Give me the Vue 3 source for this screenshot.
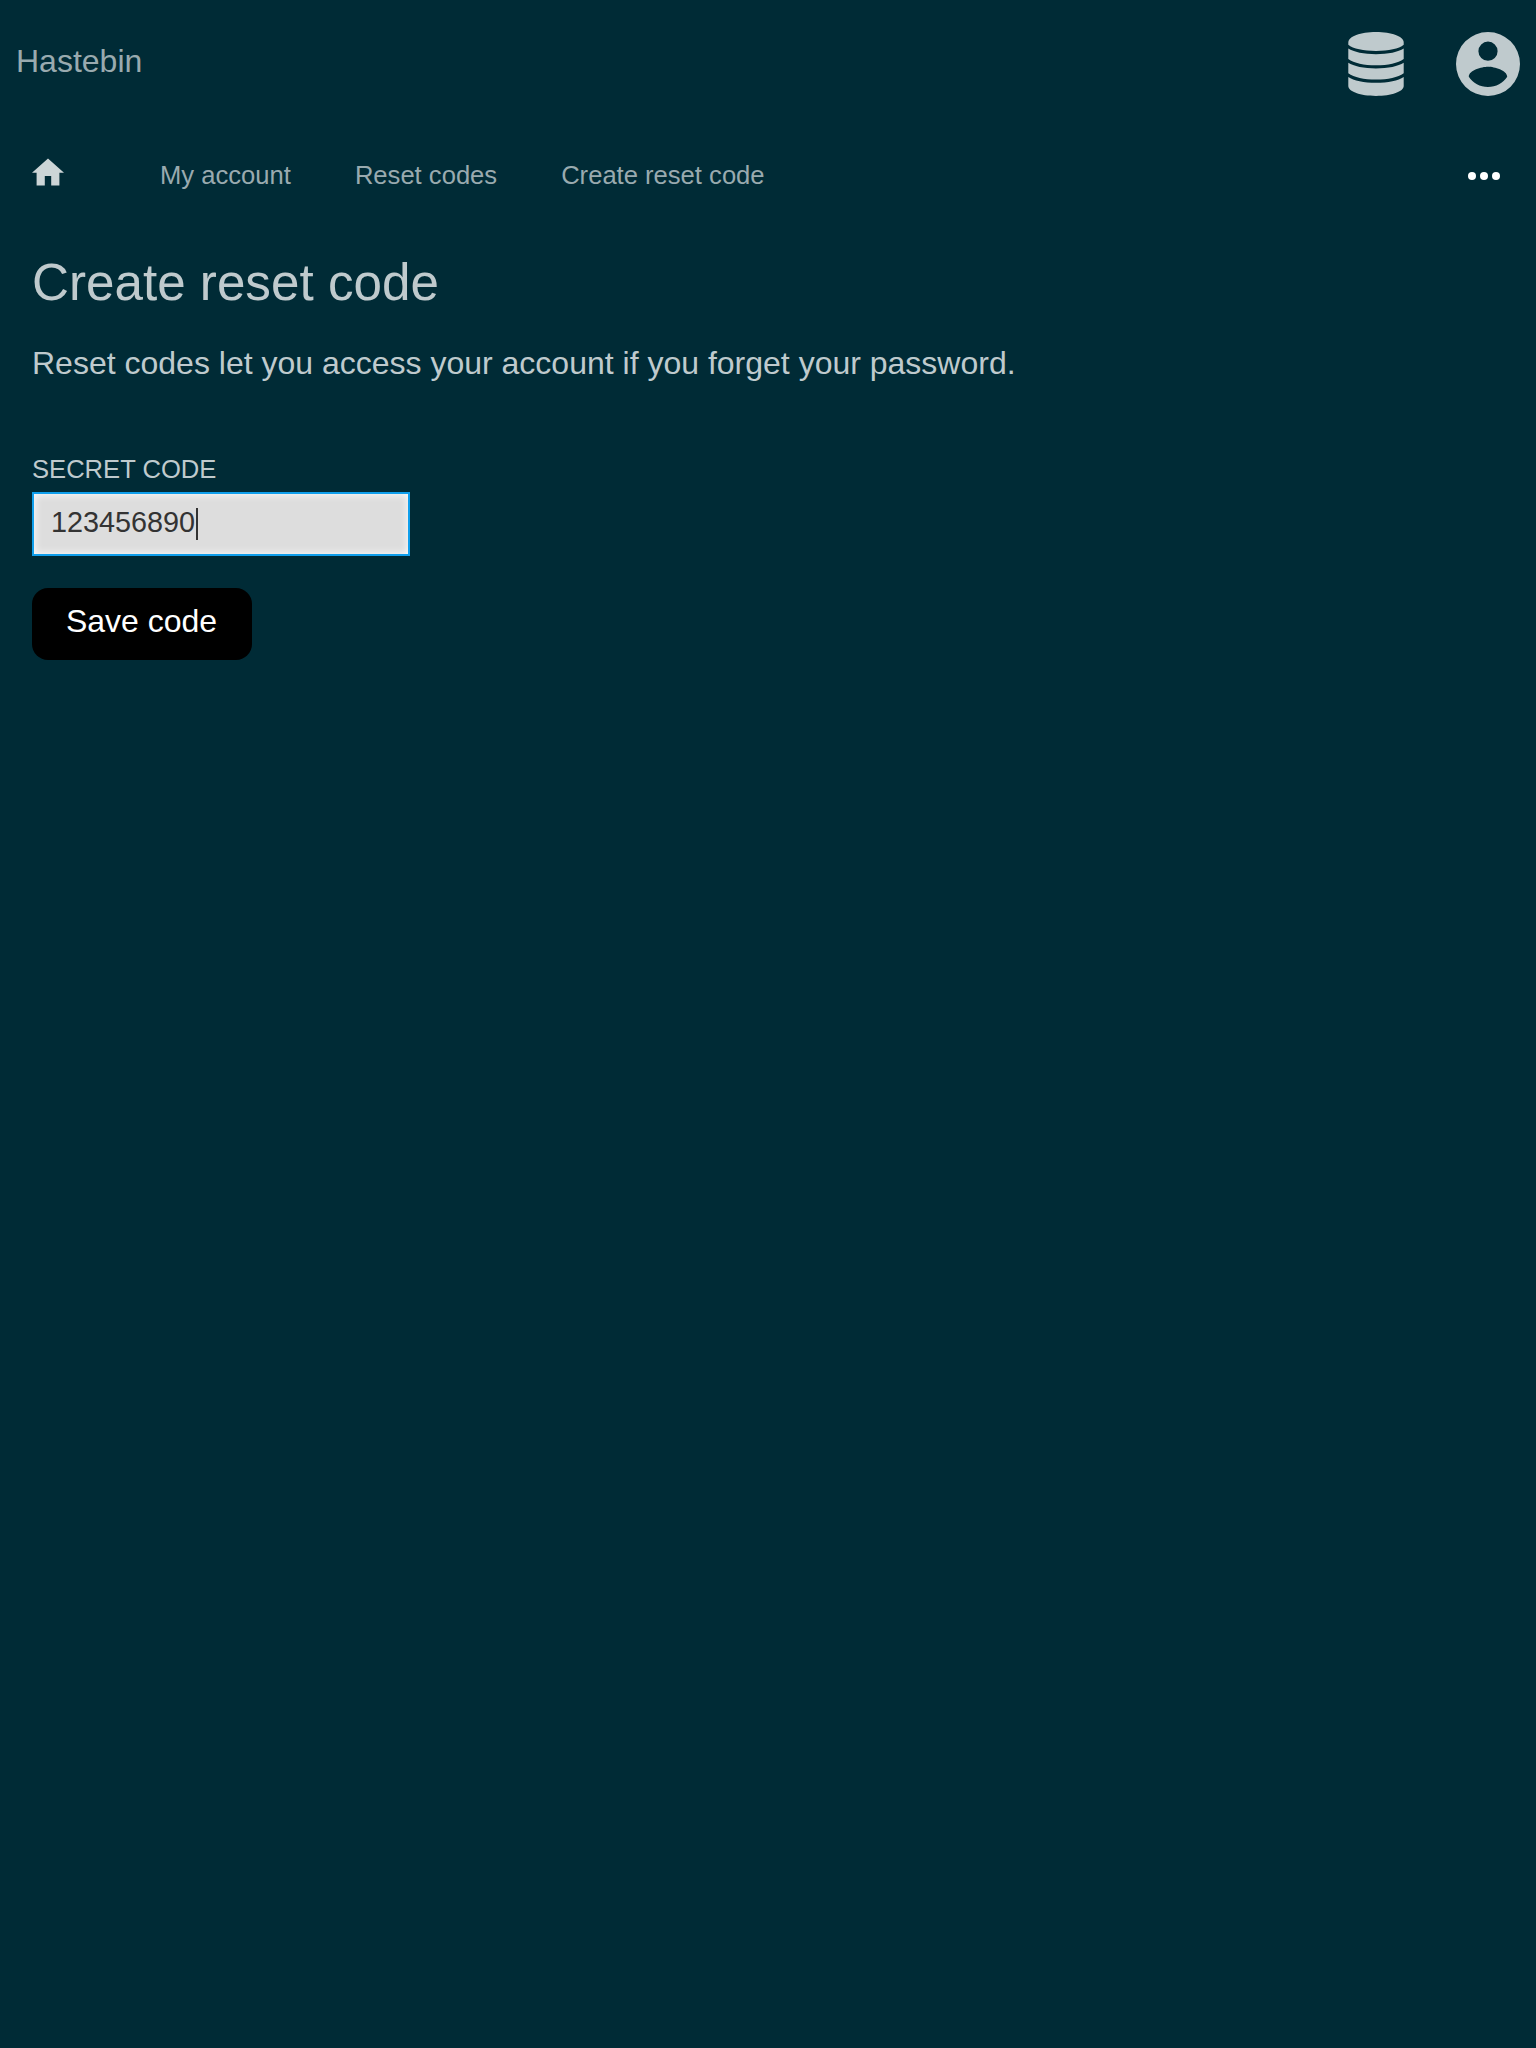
<script setup>
import { ref } from 'vue'

const code = ref('123456890')
const crumbs = ['My account', 'Reset codes', 'Create reset code']
</script>

<template>
  <div class="page">
    <header class="top">
      <a class="brand">Hastebin</a>
      <div class="actions">
        <svg class="database" viewBox="0 0 56 64">
          <path d="M.3 10.500C.3 4.300 12.500 0 28 0s27.700 4.300 27.700 10.500v2.300C51 16.800 40.500 19 28 19S5 16.800 .3 12.800z" />
          <path d="M.3 16.500C5.500 20 16 22.200 28 22.200s22.500-2.200 27.700-5.700v10.400C50 31 40 33.200 28 33.200S6 31 .3 26.900z" />
          <path d="M.3 30.700C5.500 34.200 16 36.400 28 36.400s22.500-2.200 27.700-5.700v10.500C50 45.400 40 47.600 28 47.600S6 45.400 .3 41.200z" />
          <path d="M.3 44.900C5.500 48.500 16 50.700 28 50.700s22.500-2.200 27.700-5.800v9.200C55.700 59.700 43.500 64 28 64S.3 59.700 .3 54.100z" />
        </svg>
        <svg class="account" viewBox="0 0 64 64">
          <path fill-rule="evenodd" d="M32 0a32 32 0 1 0 0 64a32 32 0 1 0 0-64zM32 9.600a9.600 9.600 0 1 1 0 19.200a9.600 9.600 0 1 1 0-19.200zM32 55c-8 0-15.100-4.100-19.200-10.300C12.900 38.300 25.600 34.800 32 34.800s19.100 3.500 19.200 9.900C47.100 50.900 40 55 32 55z" />
        </svg>
      </div>
    </header>
    <nav class="crumbs">
      <svg class="home" viewBox="0 0 32 28">
        <path d="M16 .5L0 14.800h4.600V27.500h8.200V18h6.400v9.500h8.200V14.800H32z" />
      </svg>
      <a v-for="crumb in crumbs" :key="crumb" class="crumb">{{ crumb }}</a>
      <span class="more"><i></i><i></i><i></i></span>
    </nav>
    <main class="content">
      <h1>Create reset code</h1>
      <p>Reset codes let you access your account if you forget your password.</p>
      <div class="label">SECRET CODE</div>
      <div class="field"><span class="value">{{ code }}</span><span class="caret"></span></div>
      <button class="save">Save code</button>
    </main>
  </div>
</template>

<style>
body {
  background: #002b36;
}
</style>

<style scoped>
.page {
  min-height: 2048px;
  background: #002b36;
  color: #bfcacd;
  font-family: "Liberation Sans", Arial, sans-serif;
  font-size: 32px;
  line-height: 40px;
}
.top {
  display: flex;
  justify-content: space-between;
  align-items: flex-start;
  height: 128px;
  padding: 0 16px;
  box-sizing: border-box;
}
.brand {
  margin-top: 41px;
  color: #99aaaf;
}
.actions {
  display: flex;
  gap: 52px;
  margin-top: 32px;
}
.actions svg {
  display: block;
  height: 64px;
  fill: #bfcacd;
}
.database {
  width: 56px;
}
.account {
  width: 64px;
}
.crumbs {
  display: flex;
  align-items: flex-start;
  height: 96px;
  padding: 28px 36px 0 32px;
  box-sizing: border-box;
  font-size: 25.6px;
  color: #99aaaf;
}
.home {
  width: 32px;
  height: 28px;
  margin: 2px 96px 0 0;
  fill: #ccd5d7;
}
.crumb {
  margin-right: 64px;
  line-height: 38px;
}
.more {
  display: flex;
  gap: 4px;
  margin: 16px 0 0 auto;
}
.more i {
  width: 8px;
  height: 8px;
  border-radius: 50%;
  background: #fff;
}
.content {
  padding: 29px 32px;
}
h1 {
  margin: 0;
  font-size: 51.2px;
  font-weight: 400;
  line-height: 60px;
}
p {
  margin: 30px 0 0;
}
.label {
  margin-top: 67px;
  font-size: 25.6px;
  line-height: 38px;
}
.field {
  display: flex;
  align-items: flex-start;
  width: 378px;
  height: 64px;
  margin-top: 4px;
  padding: 14px 17px;
  box-sizing: border-box;
  border: 2px solid #109fec;
  background: #ddd;
  box-shadow: inset 0 0 8px #fff;
  color: #333;
  font-size: 28.8px;
  line-height: 32px;
}
.value {
  line-height: 28px;
}
.caret {
  width: 2px;
  height: 32px;
  margin-left: 1px;
  background: #333;
}
.save {
  display: block;
  width: 220px;
  height: 72px;
  margin-top: 32px;
  padding: 0 1px 7px 0;
  border: 0;
  border-radius: 16px;
  background: #000;
  color: #fff;
  font: inherit;
}
</style>
